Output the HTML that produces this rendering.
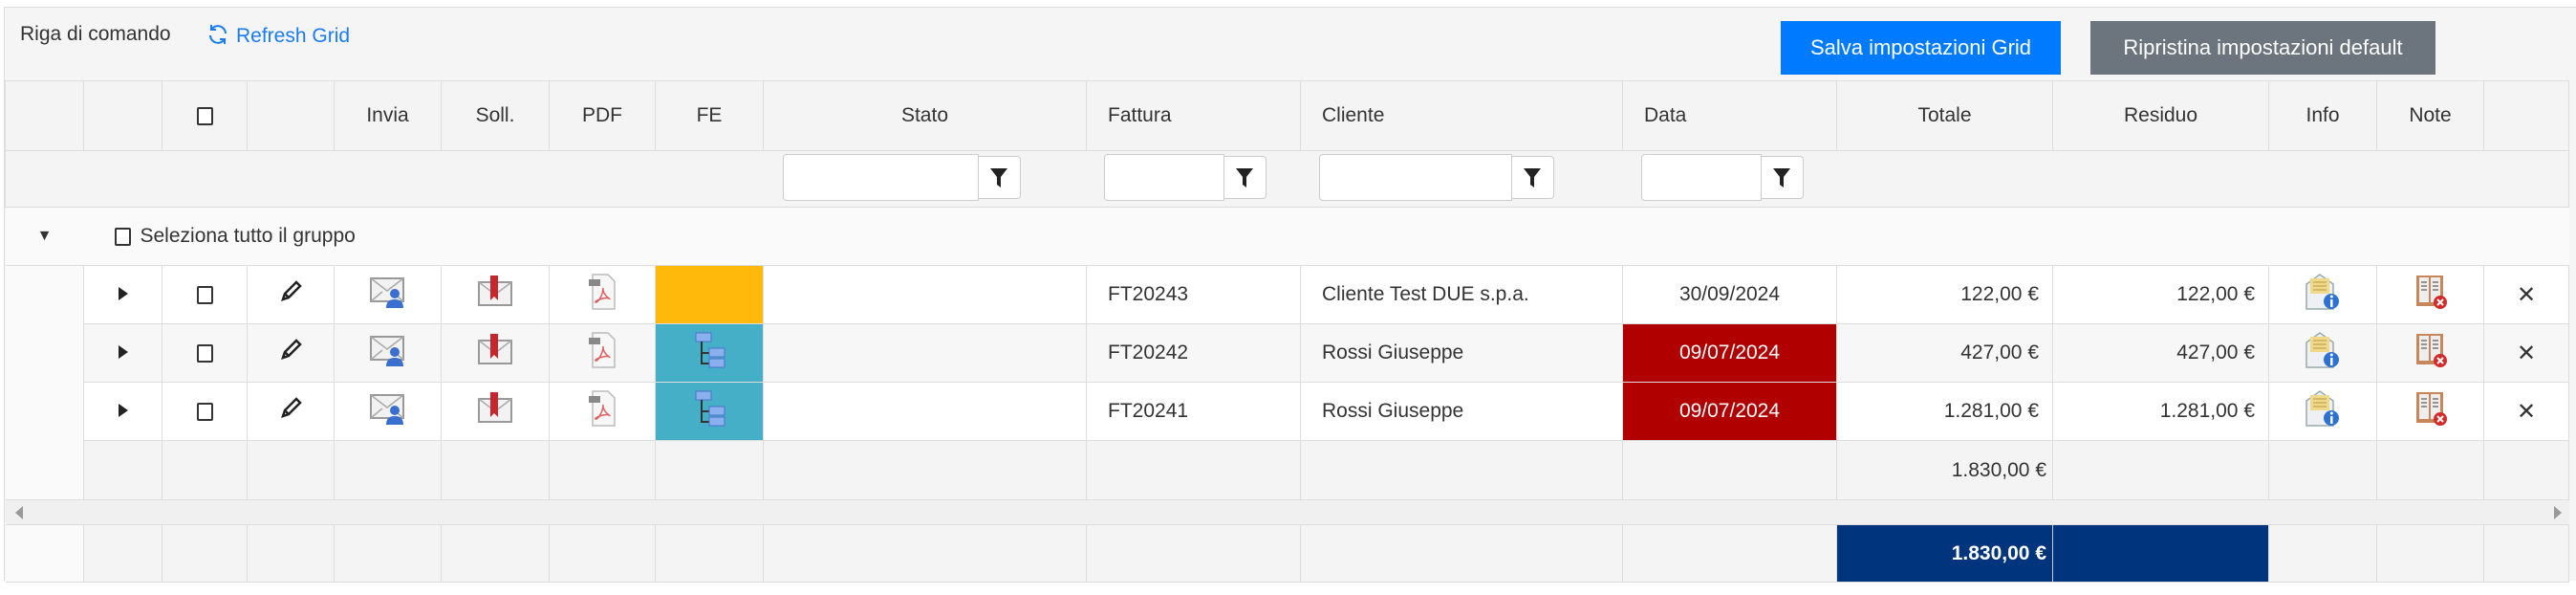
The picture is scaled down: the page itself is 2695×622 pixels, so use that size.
<!DOCTYPE html>
<html><head><meta charset="utf-8">
<style>
*{box-sizing:border-box;margin:0;padding:0}
body{width:2695px;height:622px;background:#fff;font-family:"Liberation Sans",Arial,sans-serif;font-size:21px;color:#333;position:relative;overflow:hidden}
#wrap{position:absolute;left:4px;top:7px;width:2691px;height:600px;background:#f5f5f5;border-top:1px solid #ddd;border-left:1px solid #ddd}
.tb1{position:absolute;left:16px;top:16px;color:#333}
.tb2{position:absolute;left:210px;top:16px;color:#1a7cf0}
.btn{position:absolute;top:14px;height:56px;color:#fff;font-size:22px;line-height:56px;text-align:center}
table{position:absolute;left:0;top:76px;border-collapse:collapse;table-layout:fixed;width:2682px}
td{border:1px solid #ddd;padding:0;vertical-align:middle;white-space:nowrap;overflow:hidden}
.h td{height:73px;background:#f4f4f4;text-align:center}
.f td{height:59px;background:#f4f4f4}
.g td{height:61px;background:#fafafa;border-left:none;border-right:none}
.d td{height:61px;text-align:center}
.d.w td{background:#fff}.d.a td{background:#f7f7f7}
.d td.ind{background:#fafafa;border:none}
.s td{height:62px;background:#f4f4f4}
.sc td{height:26px;background:#f0f0f0;border-left:none;border-right:none}
.ft td{height:60px;background:#f4f4f4}
.r{text-align:right!important;padding-right:14px!important}
.l{text-align:left!important;padding-left:22px!important}
.cb{display:inline-block;width:17px;height:19px;border:2px solid #333;border-radius:2px;vertical-align:middle;background:#fff}
.fi{position:absolute;top:0;height:49px}
.fin{display:inline-block;height:49px;background:#fff;border:1px solid #ccc;border-radius:4px 0 0 4px;vertical-align:top}
.fbt{display:inline-block;height:45px;width:44px;margin-top:2px;background:#fff;border:1px solid #ccc;border-left:none;border-radius:0 4px 4px 0;vertical-align:top;text-align:center;padding-top:12px}
</style></head><body>
<div id="wrap">
<div class="tb1">Riga di comando</div>
<div class="tb2"><svg width="26" height="24" viewBox="0 0 24 24" style="vertical-align:-4px;margin-right:6px"><path d="M20 11a8 8 0 0 0-14.5-4.5M4 13a8 8 0 0 0 14.5 4.5" fill="none" stroke="#1a7cf0" stroke-width="2"/><path d="M5 2v5h5M19 22v-5h-5" fill="none" stroke="#1a7cf0" stroke-width="2"/></svg>Refresh Grid</div>
<div class="btn" style="left:1858px;width:293px;background:#007bff">Salva impostazioni Grid</div>
<div class="btn" style="left:2182px;width:361px;background:#6c757d">Ripristina impostazioni default</div>

<table>
<colgroup><col style="width:82px"><col style="width:82px"><col style="width:89px"><col style="width:91px"><col style="width:112px"><col style="width:113px"><col style="width:111px"><col style="width:113px"><col style="width:338px"><col style="width:224px"><col style="width:337px"><col style="width:224px"><col style="width:226px"><col style="width:226px"><col style="width:113px"><col style="width:112px"><col style="width:89px"></colgroup>
<tr class="h"><td></td><td></td><td><span class="cb"></span></td><td></td><td>Invia</td><td>Soll.</td><td>PDF</td><td>FE</td><td>Stato</td><td class="l">Fattura</td><td class="l">Cliente</td><td class="l">Data</td><td>Totale</td><td>Residuo</td><td>Info</td><td>Note</td><td></td></tr>
<tr class="f"><td colspan="8" style="border-right:none"></td>
<td style="position:relative;border:none"><div class="fi" style="left:20px;top:3px"><span class="fin" style="width:205px"></span><span class="fbt"><svg width="18" height="20" viewBox="0 0 18 20"><path d="M0 0h18l-7 9v11l-4-3V9z" fill="#222"/></svg></span></div></td>
<td style="position:relative;border:none"><div class="fi" style="left:18px;top:3px"><span class="fin" style="width:126px"></span><span class="fbt"><svg width="18" height="20" viewBox="0 0 18 20"><path d="M0 0h18l-7 9v11l-4-3V9z" fill="#222"/></svg></span></div></td>
<td style="position:relative;border:none"><div class="fi" style="left:19px;top:3px"><span class="fin" style="width:202px"></span><span class="fbt"><svg width="18" height="20" viewBox="0 0 18 20"><path d="M0 0h18l-7 9v11l-4-3V9z" fill="#222"/></svg></span></div></td>
<td style="position:relative;border:none"><div class="fi" style="left:19px;top:3px"><span class="fin" style="width:126px"></span><span class="fbt"><svg width="18" height="20" viewBox="0 0 18 20"><path d="M0 0h18l-7 9v11l-4-3V9z" fill="#222"/></svg></span></div></td>
<td colspan="5" style="border-left:none"></td></tr>
<tr class="g"><td style="text-align:center;font-size:16px">&#9660;</td><td colspan="16" style="padding-left:32px"><span class="cb" style="margin-right:10px"></span>Seleziona tutto il gruppo</td></tr>

<tr class="d w"><td class="ind"></td><td><svg width="10" height="14"><path d="M0 0l10 7-10 7z" fill="#222"/></svg></td><td><span class="cb"></span></td><td><svg width="24" height="24" viewBox="0 0 24 24"><path d="M4 20l2-6 12-12 4 4-12 12z M6 14l4 4" fill="none" stroke="#222" stroke-width="2.5"/></svg></td>
<td><svg width="38" height="34" viewBox="0 0 38 34"><rect x="1" y="3" width="34" height="24" fill="#f2f2f2" stroke="#999" stroke-width="2"/><path d="M1 3l17 13 17-13M1 27l12-10M35 27l-12-10" fill="none" stroke="#aaa" stroke-width="1.5"/><circle cx="26" cy="19" r="5" fill="#3a6fd0"/><path d="M17 34c0-7 4-9 9-9s9 2 9 9z" fill="#3a6fd0"/></svg></td>
<td><svg width="36" height="36" viewBox="0 0 36 36"><rect x="1" y="8" width="34" height="24" fill="#f2f2f2" stroke="#999" stroke-width="2"/><path d="M1 8l17 13 17-13" fill="none" stroke="#aaa" stroke-width="1.5"/><path d="M13 1h8v26l-4-4-4 4z" fill="#c8262d"/></svg></td>
<td><svg width="32" height="40" viewBox="0 0 32 40"><path d="M6 2h16l7 7v29H6z" fill="#f7f7f7" stroke="#bbb" stroke-width="1.5"/><rect x="2" y="7" width="12" height="7" fill="#888"/><path d="M17 16c0 8-6 16-8 15s10-6 14-4-7-3-6-11" fill="none" stroke="#e06060" stroke-width="1.5"/></svg></td>
<td style="background:#ffb90a"></td><td></td><td class="l">FT20243</td><td class="l">Cliente Test DUE s.p.a.</td><td>30/09/2024</td><td class="r">122,00 €</td><td class="r">122,00 €</td>
<td><svg width="38" height="40" viewBox="0 0 38 40"><path d="M2 12l14-10 14 10v26H2z" fill="#eef0f4" stroke="#9aa" stroke-width="1.5"/><rect x="6" y="6" width="20" height="16" fill="#f1d98a"/><path d="M9 10h14M9 14h14M9 18h14" stroke="#c9b060" stroke-width="1.5"/><circle cx="28" cy="30" r="8" fill="#2d72d2"/><rect x="27" y="28" width="2.5" height="8" fill="#fff"/><circle cx="28.3" cy="25" r="1.5" fill="#fff"/></svg></td>
<td><svg width="38" height="40" viewBox="0 0 38 40"><rect x="4" y="3" width="28" height="32" fill="#c8875a"/><rect x="7" y="5" width="10" height="26" fill="#eee"/><rect x="19" y="5" width="10" height="26" fill="#eee"/><path d="M9 10h6M9 14h6M9 18h6M21 10h6M21 14h6M21 18h6" stroke="#777" stroke-width="1.5"/><circle cx="29" cy="31" r="7" fill="#d42a2a"/><path d="M26 28l6 6M32 28l-6 6" stroke="#fff" stroke-width="2"/></svg></td>
<td style="font-size:24px">✕</td></tr>

<tr class="d a"><td class="ind"></td><td><svg width="10" height="14"><path d="M0 0l10 7-10 7z" fill="#222"/></svg></td><td><span class="cb"></span></td><td><svg width="24" height="24" viewBox="0 0 24 24"><path d="M4 20l2-6 12-12 4 4-12 12z M6 14l4 4" fill="none" stroke="#222" stroke-width="2.5"/></svg></td>
<td><svg width="38" height="34" viewBox="0 0 38 34"><rect x="1" y="3" width="34" height="24" fill="#f2f2f2" stroke="#999" stroke-width="2"/><path d="M1 3l17 13 17-13M1 27l12-10M35 27l-12-10" fill="none" stroke="#aaa" stroke-width="1.5"/><circle cx="26" cy="19" r="5" fill="#3a6fd0"/><path d="M17 34c0-7 4-9 9-9s9 2 9 9z" fill="#3a6fd0"/></svg></td>
<td><svg width="36" height="36" viewBox="0 0 36 36"><rect x="1" y="8" width="34" height="24" fill="#f2f2f2" stroke="#999" stroke-width="2"/><path d="M1 8l17 13 17-13" fill="none" stroke="#aaa" stroke-width="1.5"/><path d="M13 1h8v26l-4-4-4 4z" fill="#c8262d"/></svg></td>
<td><svg width="32" height="40" viewBox="0 0 32 40"><path d="M6 2h16l7 7v29H6z" fill="#f7f7f7" stroke="#bbb" stroke-width="1.5"/><rect x="2" y="7" width="12" height="7" fill="#888"/><path d="M17 16c0 8-6 16-8 15s10-6 14-4-7-3-6-11" fill="none" stroke="#e06060" stroke-width="1.5"/></svg></td>
<td style="background:#46afc8"><svg width="36" height="38" viewBox="0 0 36 38"><rect x="4" y="1" width="16" height="9" fill="#8ab0ee" stroke="#4a72c8"/><path d="M10 10v24M10 22h8M10 33h8" stroke="#333" stroke-width="2"/><rect x="18" y="17" width="16" height="9" fill="#8ab0ee" stroke="#4a72c8"/><rect x="18" y="28" width="16" height="9" fill="#8ab0ee" stroke="#4a72c8"/></svg></td><td></td><td class="l">FT20242</td><td class="l">Rossi Giuseppe</td><td style="background:#b00000;color:#fff">09/07/2024</td><td class="r">427,00 €</td><td class="r">427,00 €</td>
<td><svg width="38" height="40" viewBox="0 0 38 40"><path d="M2 12l14-10 14 10v26H2z" fill="#eef0f4" stroke="#9aa" stroke-width="1.5"/><rect x="6" y="6" width="20" height="16" fill="#f1d98a"/><path d="M9 10h14M9 14h14M9 18h14" stroke="#c9b060" stroke-width="1.5"/><circle cx="28" cy="30" r="8" fill="#2d72d2"/><rect x="27" y="28" width="2.5" height="8" fill="#fff"/><circle cx="28.3" cy="25" r="1.5" fill="#fff"/></svg></td>
<td><svg width="38" height="40" viewBox="0 0 38 40"><rect x="4" y="3" width="28" height="32" fill="#c8875a"/><rect x="7" y="5" width="10" height="26" fill="#eee"/><rect x="19" y="5" width="10" height="26" fill="#eee"/><path d="M9 10h6M9 14h6M9 18h6M21 10h6M21 14h6M21 18h6" stroke="#777" stroke-width="1.5"/><circle cx="29" cy="31" r="7" fill="#d42a2a"/><path d="M26 28l6 6M32 28l-6 6" stroke="#fff" stroke-width="2"/></svg></td>
<td style="font-size:24px">✕</td></tr>

<tr class="d w"><td class="ind"></td><td><svg width="10" height="14"><path d="M0 0l10 7-10 7z" fill="#222"/></svg></td><td><span class="cb"></span></td><td><svg width="24" height="24" viewBox="0 0 24 24"><path d="M4 20l2-6 12-12 4 4-12 12z M6 14l4 4" fill="none" stroke="#222" stroke-width="2.5"/></svg></td>
<td><svg width="38" height="34" viewBox="0 0 38 34"><rect x="1" y="3" width="34" height="24" fill="#f2f2f2" stroke="#999" stroke-width="2"/><path d="M1 3l17 13 17-13M1 27l12-10M35 27l-12-10" fill="none" stroke="#aaa" stroke-width="1.5"/><circle cx="26" cy="19" r="5" fill="#3a6fd0"/><path d="M17 34c0-7 4-9 9-9s9 2 9 9z" fill="#3a6fd0"/></svg></td>
<td><svg width="36" height="36" viewBox="0 0 36 36"><rect x="1" y="8" width="34" height="24" fill="#f2f2f2" stroke="#999" stroke-width="2"/><path d="M1 8l17 13 17-13" fill="none" stroke="#aaa" stroke-width="1.5"/><path d="M13 1h8v26l-4-4-4 4z" fill="#c8262d"/></svg></td>
<td><svg width="32" height="40" viewBox="0 0 32 40"><path d="M6 2h16l7 7v29H6z" fill="#f7f7f7" stroke="#bbb" stroke-width="1.5"/><rect x="2" y="7" width="12" height="7" fill="#888"/><path d="M17 16c0 8-6 16-8 15s10-6 14-4-7-3-6-11" fill="none" stroke="#e06060" stroke-width="1.5"/></svg></td>
<td style="background:#46afc8"><svg width="36" height="38" viewBox="0 0 36 38"><rect x="4" y="1" width="16" height="9" fill="#8ab0ee" stroke="#4a72c8"/><path d="M10 10v24M10 22h8M10 33h8" stroke="#333" stroke-width="2"/><rect x="18" y="17" width="16" height="9" fill="#8ab0ee" stroke="#4a72c8"/><rect x="18" y="28" width="16" height="9" fill="#8ab0ee" stroke="#4a72c8"/></svg></td><td></td><td class="l">FT20241</td><td class="l">Rossi Giuseppe</td><td style="background:#b00000;color:#fff">09/07/2024</td><td class="r">1.281,00 €</td><td class="r">1.281,00 €</td>
<td><svg width="38" height="40" viewBox="0 0 38 40"><path d="M2 12l14-10 14 10v26H2z" fill="#eef0f4" stroke="#9aa" stroke-width="1.5"/><rect x="6" y="6" width="20" height="16" fill="#f1d98a"/><path d="M9 10h14M9 14h14M9 18h14" stroke="#c9b060" stroke-width="1.5"/><circle cx="28" cy="30" r="8" fill="#2d72d2"/><rect x="27" y="28" width="2.5" height="8" fill="#fff"/><circle cx="28.3" cy="25" r="1.5" fill="#fff"/></svg></td>
<td><svg width="38" height="40" viewBox="0 0 38 40"><rect x="4" y="3" width="28" height="32" fill="#c8875a"/><rect x="7" y="5" width="10" height="26" fill="#eee"/><rect x="19" y="5" width="10" height="26" fill="#eee"/><path d="M9 10h6M9 14h6M9 18h6M21 10h6M21 14h6M21 18h6" stroke="#777" stroke-width="1.5"/><circle cx="29" cy="31" r="7" fill="#d42a2a"/><path d="M26 28l6 6M32 28l-6 6" stroke="#fff" stroke-width="2"/></svg></td>
<td style="font-size:24px">✕</td></tr>

<tr class="s"><td style="background:#fafafa;border:none"></td><td></td><td></td><td></td><td></td><td></td><td></td><td></td><td></td><td></td><td></td><td></td><td class="r" style="padding-right:6px!important">1.830,00 €</td><td></td><td></td><td></td><td></td></tr>
<tr class="sc"><td colspan="17" style="position:relative"><svg width="8" height="14" style="position:absolute;left:10px;top:6px"><path d="M8 0v14L0 7z" fill="#999"/></svg><svg width="8" height="14" style="position:absolute;right:8px;top:6px"><path d="M0 0v14l8-7z" fill="#999"/></svg></td></tr>
<tr class="ft"><td style="background:#fafafa;border-left:none"></td><td></td><td></td><td></td><td></td><td></td><td></td><td></td><td></td><td></td><td></td><td></td><td class="r" style="background:#00347d;color:#fff;font-weight:bold;padding-right:6px!important;border-right:1px solid #ccd">1.830,00 €</td><td style="background:#00347d"></td><td></td><td></td><td></td></tr>
</table>
</div>
</body></html>
